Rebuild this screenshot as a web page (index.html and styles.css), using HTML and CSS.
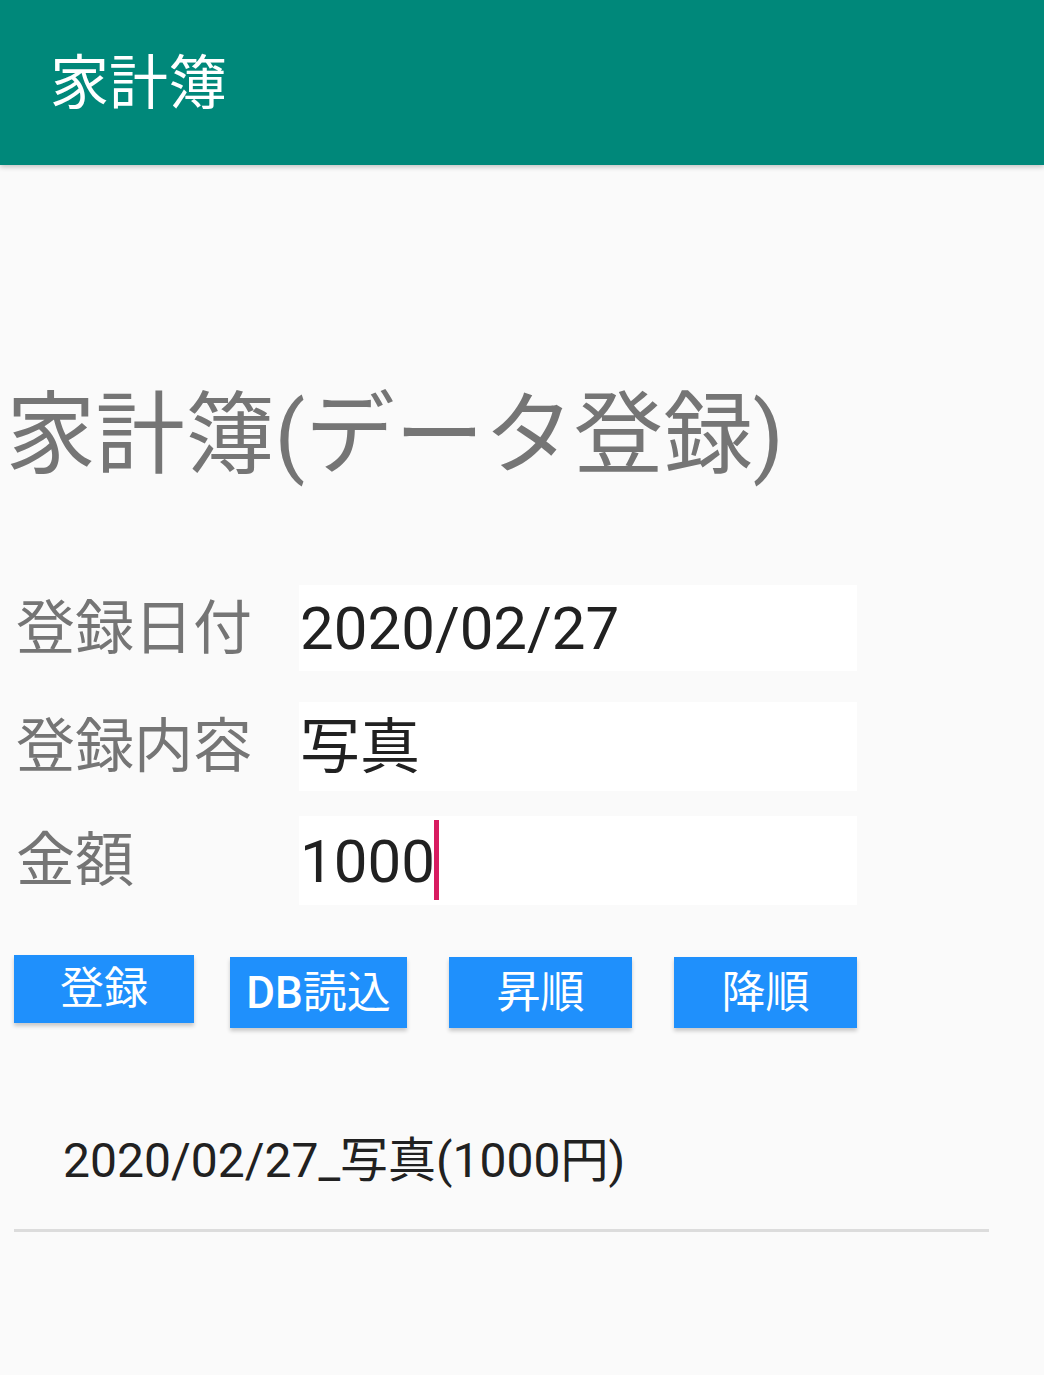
FILE: index.html
```html
<!DOCTYPE html>
<html lang="ja">
<head>
<meta charset="utf-8">
<title>家計簿</title>
<link rel="stylesheet" href="styles.css">
</head>
<body>
<header class="appbar"><span class="appbar-title">家計簿</span></header>
<main class="content">
  <h1 class="page-title">家計簿(データ登録)</h1>
  <div class="form">
    <div class="row row-1">
      <span class="label">登録日付</span>
      <div class="field"><span class="value">2020/02/27</span></div>
    </div>
    <div class="row row-2">
      <span class="label">登録内容</span>
      <div class="field"><span class="value">写真</span></div>
    </div>
    <div class="row row-3">
      <span class="label">金額</span>
      <div class="field"><span class="value">1000</span><span class="cursor"></span></div>
    </div>
  </div>
  <div class="buttons">
    <button class="btn btn-1">登録</button>
    <button class="btn btn-2"><span class="latin">DB</span>読込</button>
    <button class="btn btn-3">昇順</button>
    <button class="btn btn-4">降順</button>
  </div>
  <ul class="list">
    <li class="list-item"><span class="list-text">2020/02/27_写真(1000円)</span></li>
  </ul>
</main>
</body>
</html>
```
FILE: styles.css
```css
* { box-sizing: border-box; }
html, body {
  margin: 0;
  padding: 0;
  background: #fafafa;
  font-family: Roboto, "Noto Sans CJK JP", sans-serif;
}
.appbar {
  height: 165px;
  background: #00887a;
  display: flex;
  align-items: center;
  padding-left: 50px;
  box-shadow: 0 2px 5px rgba(0,0,0,0.22);
  position: relative;
}
.appbar-title {
  color: #fff;
  font-size: 59px;
  line-height: 1;
  font-family: "Noto Sans CJK JP", sans-serif;
  margin-top: -8px;
}
.content {
  display: flex;
  flex-direction: column;
}
.page-title {
  margin: 221px 0 0 6px;
  font-weight: 400;
  font-size: 89.5px;
  line-height: 100px;
  height: 100px;
  color: #757575;
  font-family: Roboto, "Noto Sans CJK JP", sans-serif;
  white-space: nowrap;
}
.form {
  margin-top: 99px;
  display: flex;
  flex-direction: column;
}
.row {
  display: flex;
  align-items: stretch;
}
.row-1 { height: 86px; }
.row-2 { height: 89px; margin-top: 31px; }
.row-3 { height: 89px; margin-top: 25px; }
.label {
  width: 299px;
  padding-left: 16px;
  padding-bottom: 10px;
  font-size: 59px;
  color: #757575;
  display: flex;
  align-items: center;
  font-family: "Noto Sans CJK JP", sans-serif;
  white-space: nowrap;
}
.field {
  width: 558px;
  background: #fff;
  display: flex;
  align-items: center;
  padding-left: 1px;
}
.value {
  font-size: 60px;
  color: #212121;
  line-height: 1;
  margin-top: 2px;
}
.cursor {
  display: inline-block;
  width: 5px;
  height: 80px;
  background: #d81b60;
  margin-left: -1px;
  margin-top: -2px;
}
.buttons {
  display: flex;
  align-items: flex-start;
  padding-left: 14px;
  margin-top: 50px;
}
.btn {
  border: none;
  background: #1f90fc;
  color: #fff;
  font-family: Roboto, "Noto Sans CJK JP", sans-serif;
  font-size: 44px;
  font-weight: 400;
  line-height: 1;
  padding: 0;
  box-shadow: 0 3px 4px rgba(0,0,0,0.2);
  display: flex;
  align-items: center;
  justify-content: center;
}
.latin { font-weight: 500; }
.btn-1 { width: 180px; height: 68px; }
.btn-2 { width: 177px; height: 71px; margin: 2px 0 0 36px; }
.btn-3 { width: 183px; height: 71px; margin: 2px 0 0 42px; }
.btn-4 { width: 183px; height: 71px; margin: 2px 0 0 42px; }
.list {
  list-style: none;
  margin: 90px 0 0 14px;
  padding: 0;
  width: 975px;
}
.list-item {
  border-bottom: 3px solid #dcdcdc;
  padding: 0 0 26px 49px;
  height: 114px;
  display: flex;
  align-items: center;
}
.list-text {
  font-size: 48px;
  color: #212121;
  line-height: 1;
  white-space: nowrap;
}
```
